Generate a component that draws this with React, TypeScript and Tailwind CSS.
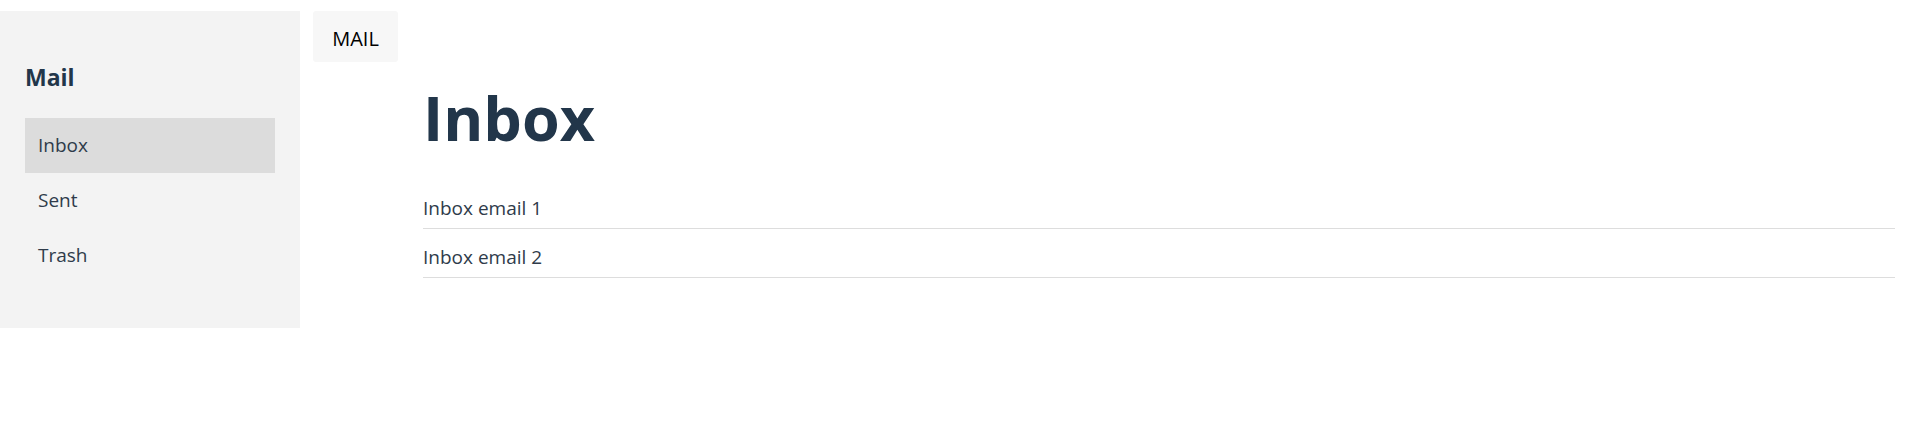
import React from 'react';

const folders = ['Inbox', 'Sent', 'Trash'];
const emails = ['Inbox email 1', 'Inbox email 2'];

export default function App() {
  return (
    <div className="min-h-[426px] bg-white pt-[11px] font-['Open_Sans',sans-serif] text-[#2f3b4a]">
      <div className="flex items-start">
        {/* Sidebar */}
        <aside className="w-[300px] shrink-0 bg-[#f3f3f3] px-[25px] pt-[46px] pb-[45px]">
          <h2 className="mb-[21px] text-[23px] leading-[40px] font-bold text-[#22364a]">Mail</h2>
          <nav className="flex flex-col">
            {folders.map((f, i) => (
              <div
                key={f}
                className={`h-[55px] flex items-center px-[13px] text-[19px] ${i === 0 ? 'bg-[#dcdcdc]' : ''}`}
              >
                {f}
              </div>
            ))}
          </nav>
        </aside>

        {/* Mail tab button */}
        <div className="ml-[13px] h-[51px] w-[85px] flex items-center justify-center rounded-[3px] bg-[#f7f7f7] pt-[4px] text-[20px] font-medium text-black">
          MAIL
        </div>

        {/* Main */}
        <main className="ml-[25px] mr-[16px] flex-1 pt-[62px]">
          <h1 className="text-[61px] leading-[90px] font-bold text-[#22364a]">Inbox</h1>
          <ul className="mt-[17px]">
            {emails.map((e) => (
              <li key={e} className="border-b border-[#dddddd] pt-[14px] pb-[6px] text-[19px] leading-[28px]">
                {e}
              </li>
            ))}
          </ul>
        </main>
      </div>
    </div>
  );
}
